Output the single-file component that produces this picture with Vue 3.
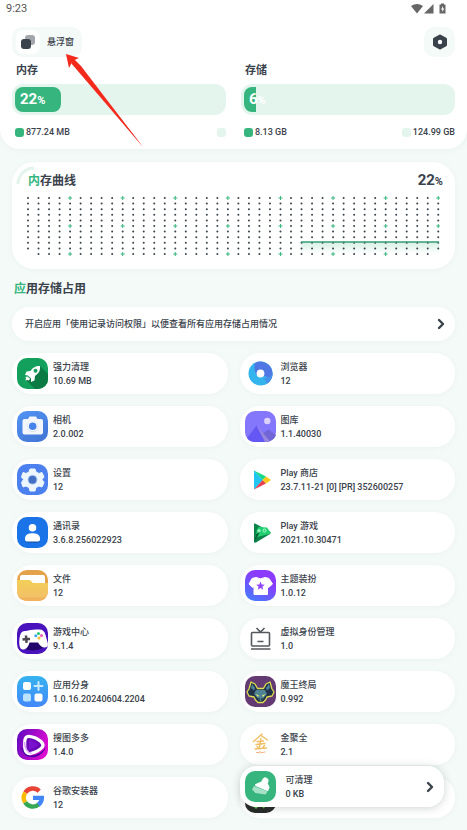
<script setup>
import { computed } from 'vue';

const gauges = [
  { label: '内存', percent: 22, used: '877.24 MB', total: '' },
  { label: '存储', percent: 6, used: '8.13 GB', total: '124.99 GB' },
];

// Icon artwork, drawn on a 31 x 31 grid
const icons = {
  rocket: `<rect width="31" height="31" rx="10" fill="#12a05c"/>
    <path d="M23 8 31 16V21A10 10 0 0 1 21 31H18L9 22Z" fill="#0b7a43"/>
    <path d="M23 8C18 8 15.500 10 13.500 13L9.500 13.500 8 17 11 17.500 14 20.500 14 24 17.500 22.500 18 18C21.500 15.500 23.500 13 23 8Z" fill="#fff"/>
    <circle cx="18.500" cy="12.800" r="2" fill="#12a05c"/>
    <path d="M10.500 18.500 8.500 19 9 20.500 8.500 22.500 10.500 22 12 22.500 13 20.500Z" fill="#fff"/>`,
  camera: `<defs><linearGradient id="cam" x2="0.600" y2="1"><stop stop-color="#5295f5"/><stop offset="1" stop-color="#4478d8"/></linearGradient></defs>
    <rect width="31" height="31" rx="10" fill="url(#cam)"/>
    <path d="M7.500 8H11L12.500 5.500H19L20.500 8H24Q26 8 26 10V21.500Q26 23.500 24 23.500H7.500Q5.500 23.500 5.500 21.500V10Q5.500 8 7.500 8Z" fill="#f3f6fb"/>
    <circle cx="15.700" cy="15.500" r="5.600" fill="#d5dff0"/><circle cx="15.700" cy="15.300" r="5" fill="#fff"/>
    <circle cx="15.700" cy="15.300" r="3.800" fill="#4583ea"/>`,
  gear: `<rect width="31" height="31" rx="10" fill="#4c80ee"/>
    <path d="M13 5H18L19 8 22 9.500 25 8.500 27 13 25 15.500 27 18.500 25 23 22 22 19 23.500 18 27H13L12 23.500 9 22 6 23 4.500 18.500 6.500 15.500 4.500 13 6 8.500 9 9.500 12 8Z" fill="#edf6ff" stroke="#edf6ff" stroke-width="1" stroke-linejoin="round"/>
    <circle cx="15.500" cy="15.700" r="5" fill="#b9d2f6"/><circle cx="15.500" cy="15.700" r="4" fill="#436fc4"/>`,
  contact: `<rect width="31" height="31" rx="10" fill="#1b73e8"/>
    <path d="M8 24H23Q22 26 20 26H11Z" fill="#155bb9"/>
    <circle cx="15.500" cy="10.800" r="3.800" fill="#fff"/>
    <path d="M8 21.500C8 17.500 12 16.300 15.500 16.300S23 17.500 23 21.500V22.500Q23 24.500 21 24.500H10Q8 24.500 8 22.500Z" fill="#fff"/>`,
  folder: `<defs><linearGradient id="fold" x2="0" y2="1"><stop stop-color="#f3cf58"/><stop offset="1" stop-color="#f3bd6a"/></linearGradient></defs>
    <rect width="31" height="31" rx="10" fill="#e4a24b"/>
    <path d="M3 14V7Q3 5 5 5H26Q28 5 28 7V14Z" fill="#fff"/>
    <path d="M0 10H12Q14 10 14.500 11.500Q15 13 17 13H31V21A10 10 0 0 1 21 31H10A10 10 0 0 1 0 21Z" fill="url(#fold)"/>
    <path d="M1 25.500Q1.500 28 4 29.200L10 31H21Q28 30.500 30 25.500L28 27.500H3Z" fill="#f0b25a"/>`,
  gamepad: `<rect width="31" height="31" rx="10" fill="#4a12bd"/>
    <path d="M2 22Q10 29 20 27 27 26 29 20L20 18H12Z" fill="#21056c"/>
    <path d="M9 8Q14 6 22 6.500Q27 6 28.500 12L31 21Q31 24.500 27.500 24.500Q24 24.500 21 19.500H12.500Q11 25.500 7 26.500Q2.500 27 2.300 21Q2 14 4 10Q5.500 7.500 9 8Z" fill="#fff"/>
    <path d="M8 12.500H10.500V15H13V17.500H10.500V20H8V17.500H5.500V15H8Z" transform="rotate(-5 9 16)" fill="#4b4650"/>
    <circle cx="21.500" cy="10.500" r="1.600" fill="#36c77b"/><circle cx="24.500" cy="12.500" r="1.500" fill="#e659b5"/>
    <circle cx="18.800" cy="12.800" r="1.500" fill="#36a8e9"/><circle cx="22" cy="15" r="1.600" fill="#f6be38"/>`,
  clone: `<defs><linearGradient id="cl" x2="0" y2="1"><stop stop-color="#36b3ee"/><stop offset="1" stop-color="#4387fa"/></linearGradient></defs>
    <rect width="31" height="31" rx="10" fill="url(#cl)"/>
    <rect x="6" y="6" width="8" height="8" rx="2" fill="#fff"/><rect x="6" y="17.500" width="8" height="8" rx="2" fill="#b9e3ff"/>
    <rect x="17.500" y="17.500" width="8" height="8" rx="2" fill="#fff"/>
    <path d="M21.500 6V14M17.500 10H25.500" stroke="#c8eaff" stroke-width="2" stroke-linecap="round"/>`,
  video: `<defs><linearGradient id="vid" y2="0.400"><stop stop-color="#5a0bc0"/><stop offset="1" stop-color="#dc0bd0"/></linearGradient></defs>
    <rect width="31" height="31" rx="10" fill="url(#vid)"/>
    <path d="M4 18Q6 29 17 28 27 26 29 17Q25 26 13 27Z" fill="#42049a"/>
    <path d="M12 7.300Q8 7 7.700 13V18Q8 25 13.500 24.500Q21 23 25.500 18Q27 15.500 24 12.500Q19 8 12 7.300Z" fill="#6a08b8" stroke="#fff" stroke-width="3.200"/>
    <path d="M7.500 13Q8 23 14.500 24.500" stroke="#d9a8f5" stroke-width="1.500" fill="none"/>
    <path d="M12 11V21Q17 20 21 16Q17 11.500 12 11Z" fill="#7c10cf"/>`,
  google: `<g fill="none" stroke-width="4.400"><path d="M8.300 10.600A9 9 0 0 1 22.200 9.100" stroke="#e94335"/>
    <path d="M8.200 20.300A9 9 0 0 1 8.300 10.600" stroke="#fbbc05"/><path d="M21.800 22.400A9 9 0 0 1 8.200 20.300" stroke="#34a853"/>
    <path d="M16 15.900H24.800A9 9 0 0 1 21.300 22.800" stroke="#4285f4"/></g>`,
  browser: `<circle cx="15.500" cy="15.500" r="12" fill="#34b4ec"/>
    <path d="M10 5Q8 12 12 17 16 20.500 20 18Q26 20 22 25.600A12 12 0 0 0 20 4.400Q14 2.500 10 5Z" fill="#4f78e4"/>
    <path d="M15.500 19.500Q21 20 21.500 26A12 12 0 0 0 27.500 15Q24 22 15.500 19.500Z" fill="#4692e8"/>
    <circle cx="15.500" cy="15.500" r="3.900" fill="#fff"/>`,
  gallery: `<rect width="31" height="31" rx="10" fill="#8577fb"/>
    <path d="M17 23 23.500 18.500 31 24Q29 30 21 31H15Z" fill="#7165d8"/>
    <path d="M2 27 11.500 14.500 22 31H10Q4.500 31 2 27Z" fill="#6557f3"/>
    <path d="M11.500 14.500 25 30.300 20 31Z" fill="#9787de"/><circle cx="22.300" cy="10" r="3.200" fill="#dcd2fc"/>`,
  play: `<path d="M9 6.500V25.500L18 16Z" fill="#20c5f4"/><path d="M9 6.500 21 12.500 17.700 16Z" fill="#18d987"/>
    <path d="M9 25.500 21 19.500 17.700 16Z" fill="#e74150"/><path d="M21 12.500 26 16 21 19.500 17.500 16Z" fill="#fcc818"/>`,
  playgames: `<path d="M9 6.500Q10 6 12 7.500L25 14.500Q26.500 16 25 17L11 25.500Q9 26 9 24.500Z" fill="#0b8349"/>
    <path d="M12 12.500 13.500 10 22 10.500 25.500 15.500 24.500 17 10 20.500Z" fill="#23d071"/><path d="M9 25.500 15 15 11 17Z" fill="#066137"/>
    <path d="M14 12V15.500M12.300 13.800H15.700" stroke="#c5ffd8" stroke-width="1"/>
    <circle cx="19.500" cy="13.500" r="1.500" fill="none" stroke="#c5ffd8" stroke-width="0.900"/>`,
  theme: `<defs><linearGradient id="th" x1="0.200" y1="1" x2="0.600" y2="0.300"><stop stop-color="#467bff"/><stop offset="1" stop-color="#8b3bfd"/></linearGradient></defs>
    <rect width="31" height="31" rx="10" fill="url(#th)"/>
    <path d="M11 7.500Q15.500 10 20 7.500L24 8.500 27.500 14 23.500 17.500 22.500 16.500V24.500H9V16.500L7.500 17.500 4 14 7 8.500Z" fill="#fff" stroke="#fff" stroke-linejoin="round"/>
    <path d="M15.500 11.500 16.700 14.500 19.800 14.700 17.400 16.700 18.200 19.700 15.500 18 12.800 19.700 13.600 16.700 11.200 14.700 14.300 14.500Z" fill="#9147f5"/>`,
  device: `<g fill="none" stroke="#55585c" stroke-width="1.600"><rect x="6.500" y="9.500" width="18" height="13.500" rx="1"/>
    <path d="M11.500 5 15.500 9 19.500 5M12.500 18.500H18.500M6 26H25.500"/></g>`,
  demon: `<rect width="31" height="31" rx="10" fill="#633a71"/>
    <path d="M6 6 10 8 12.500 12.500H18.500L21 8 25 6 27 13 29 16 27 20 22 21 20.500 24 18 26.500H13L10.500 24 9 21 4 20 2 16 4 13Z" fill="#213249" stroke="#dddf51" stroke-width="1.300" stroke-linejoin="round"/>
    <path d="M7 8 10 12 9 14.500 6 12ZM24 8 21 12 22 14.500 25 12Z" fill="#498299"/>
    <path d="M11 14H20L22 18 18.500 22 17 25H14L12.500 22 9 18Z" fill="#4f8293"/>
    <path d="M10.500 18 14 19.500 13 21ZM20.500 18 17 19.500 18 21Z" fill="#eef56b"/><path d="M14 22V25M17 22V25" stroke="#172334"/>`,
  gold: `<g fill="none" stroke="#f0bd63" stroke-linecap="round"><path d="M17 5 8.500 12.500M16 6.500 22.500 11M12 12.500 18.500 12M16 9.500 14.500 18M11 15.500 20 14.500M12 17.500 14 19M19.500 16.500 18 18.500M10 20 21.500 19" stroke-width="1.400"/>
    <path d="M11.500 23.500H13.500M15 22.500V24M16.500 23.500H18M19 23H20" stroke="#f2b183" stroke-width="1.200"/></g>`,
  dark: `<rect width="31" height="31" rx="10" fill="#292b2a"/><path d="M9 24 11 26 13 24M18 26 20 24" stroke="#5fbf45" stroke-width="1.500" fill="none"/>`,
  broom: `<rect width="31" height="31" rx="10" fill="#36b67e"/>
    <path d="M11 14 17 11.500 18.500 8.500Q21 6 22.500 9Q23 10.500 21.500 12L23.500 16.500 22.500 19Z" fill="#fff" stroke="#fff" stroke-width="2" stroke-linejoin="round"/>
    <path d="M9 15 22.500 20.500 20.500 23.500 10.500 22 7 18.500Z" fill="#a5e2c8"/>`,
};

const apps = [
  { name: '强力清理', detail: '10.69 MB', icon: 'rocket' },
  { name: '浏览器', detail: '12', icon: 'browser' },
  { name: '相机', detail: '2.0.002', icon: 'camera' },
  { name: '图库', detail: '1.1.40030', icon: 'gallery' },
  { name: '设置', detail: '12', icon: 'gear' },
  { name: 'Play 商店', detail: '23.7.11-21 [0] [PR] 352600257', icon: 'play' },
  { name: '通讯录', detail: '3.6.8.256022923', icon: 'contact' },
  { name: 'Play 游戏', detail: '2021.10.30471', icon: 'playgames' },
  { name: '文件', detail: '12', icon: 'folder' },
  { name: '主题装扮', detail: '1.0.12', icon: 'theme' },
  { name: '游戏中心', detail: '9.1.4', icon: 'gamepad' },
  { name: '虚拟身份管理', detail: '1.0', icon: 'device' },
  { name: '应用分身', detail: '1.0.16.20240604.2204', icon: 'clone' },
  { name: '魔王终局', detail: '0.992', icon: 'demon' },
  { name: '搜图多多', detail: '1.4.0', icon: 'video' },
  { name: '金聚全', detail: '2.1', icon: 'gold' },
  { name: '谷歌安装器', detail: '12', icon: 'google' },
  { name: '', detail: '', icon: 'dark' },
];

const COLS = 40;
const ROWS = 11;

// Every fifth column carries a plus at the top, middle and bottom
const grid = computed(() => {
  const dots = [];
  const marks = [];
  for (let c = 0; c < COLS; c++) {
    for (let r = 0; r < ROWS; r++) {
      // both bottom corners stay empty
      if (r === ROWS - 1 && (c === 0 || c === COLS - 1)) continue;
      const point = { x: 2 + c * 10.52, y: 3 + r * 5.6 };
      if (c % 5 === 4 && r % 5 === 0) marks.push(point);
      else dots.push(point);
    }
  }
  return { dots, marks };
});
</script>

<template>
  <div class="page">
    <header class="top">
      <div class="status">
        <span>9:23</span>
        <svg width="36" height="12" viewBox="0 0 36 12" fill="#666">
          <path d="M0 3Q6 -1 12 3L6 10.500Z" />
          <path d="M13 10.500 22.500 1V10.500Z" />
          <path d="M28.500 1.500H30V0.500H33V1.500H34.500V10.500H28.500Z" />
          <path d="M32 3 30 6.500H31.300V9L33.300 5.500H32Z" fill="#fff" />
        </svg>
      </div>

      <div class="toolbar">
        <button class="float-btn">
          <span class="float-icon">
            <svg width="14" height="14" viewBox="0 0 14 14">
              <rect x="4" y="0" width="10" height="10" rx="3" fill="#a3a7ab" />
              <rect x="0" y="4" width="10" height="10" rx="3" fill="#3a424b" />
            </svg>
          </span>
          悬浮窗
        </button>
        <button class="settings-btn" aria-label="设置">
          <svg width="16" height="16" viewBox="0 0 16 16">
            <path d="M8 2 13.500 5V11L8 14 2.500 11V5Z" fill="#3a424b" stroke="#3a424b" stroke-width="3" stroke-linejoin="round" />
            <circle cx="8" cy="8" r="2.200" fill="#fff" />
          </svg>
        </button>
      </div>

      <div class="gauges">
        <section v-for="g in gauges" :key="g.label" class="gauge">
          <h2>{{ g.label }}</h2>
          <div class="bar">
            <div class="fill" :class="{ clipped: g.percent < 10 }" :style="{ width: g.percent + '%' }">
              <span class="percent">{{ g.percent }}<small>%</small></span>
            </div>
          </div>
          <div class="legend">
            <span class="key"><i class="swatch used"></i>{{ g.used }}</span>
            <span class="key"><i class="swatch"></i>{{ g.total }}</span>
          </div>
        </section>
      </div>
    </header>

    <main>
      <section class="chart card">
        <svg class="corner" width="20" height="20" viewBox="0 0 20 20">
          <path d="M2 18A16 16 0 0 1 18 2" fill="none" stroke="#e3f4ec" stroke-width="3" />
        </svg>
        <div class="chart-head">
          <h2><em>内</em>存曲线</h2>
          <span class="percent">22<small>%</small></span>
        </div>
        <svg class="plot" viewBox="0 0 414 62">
          <defs>
            <linearGradient id="area" x2="0" y2="1">
              <stop stop-color="#36b67e" stop-opacity="0.2" />
              <stop offset="1" stop-color="#36b67e" stop-opacity="0" />
            </linearGradient>
          </defs>
          <rect x="275" y="47" width="138" height="12" fill="url(#area)" />
          <circle v-for="(d, i) in grid.dots" :key="i" :cx="d.x" :cy="d.y" r="1" fill="#3a424b" />
          <path
            v-for="(m, i) in grid.marks"
            :key="'m' + i"
            :d="`M${m.x - 2} ${m.y}h4M${m.x} ${m.y - 2}v4`"
            stroke="#36b67e"
          />
          <path d="M275 47H413" stroke="#369c74" stroke-width="1.600" />
        </svg>
      </section>

      <h2 class="section-title"><em>应</em>用存储占用</h2>

      <button class="notice card">
        <span>开启应用「使用记录访问权限」以便查看所有应用存储占用情况</span>
        <svg class="chevron" width="8" height="12" viewBox="0 0 8 12"><path d="M2 2 6 6 2 10" /></svg>
      </button>

      <ul class="apps">
        <li v-for="app in apps" :key="app.icon">
          <button class="app card">
            <svg class="app-icon" viewBox="0 0 31 31" aria-hidden="true" v-html="icons[app.icon]"></svg>
            <span class="app-text">
              <span>{{ app.name }}</span>
              <span>{{ app.detail }}</span>
            </span>
          </button>
        </li>
      </ul>
    </main>

    <button class="cleaner">
      <svg class="app-icon" viewBox="0 0 31 31" aria-hidden="true" v-html="icons.broom"></svg>
      <span class="app-text">
        <span>可清理</span>
        <span>0 KB</span>
      </span>
      <svg class="chevron" width="8" height="12" viewBox="0 0 8 12"><path d="M2 2 6 6 2 10" /></svg>
    </button>

    <svg class="pointer" width="80" height="96" viewBox="0 0 80 96" aria-hidden="true">
      <path d="M1 0 14 4 9.500 6 78 93 7 8 4 14Z" fill="#f3291c" />
      <path d="M9 5 16 12 78 93 6 9Z" fill="#f3291c" />
    </svg>
  </div>
</template>

<style>
body {
  background: #f4faf8;
}
</style>

<style scoped>
.page {
  position: relative;
  height: 100vh;
  overflow: hidden;
  background: #f4faf8;
  color: #3a424b;
  font-family: Roboto, "Noto Sans CJK SC", sans-serif;
  font-size: 9px;
  font-weight: 500;
  line-height: 14px;
}

button {
  border: none;
  padding: 0;
  color: inherit;
  font: inherit;
  text-align: left;
  cursor: pointer;
}

h2 {
  margin: 0;
  font-weight: 700;
}

em {
  color: #36b67e;
  font-style: normal;
}

svg {
  display: block;
  flex-shrink: 0;
}

.top {
  background: #fff;
  border-radius: 0 0 20px 20px;
  padding: 0 12px 10px;
  box-shadow: 0 1px 6px rgba(60, 110, 90, 0.06);
}

.status {
  display: flex;
  justify-content: space-between;
  align-items: center;
  height: 18px;
  margin: 0 8px 9px -6px;
  font-size: 11px;
  font-weight: 400;
  color: #555;
}

.toolbar {
  display: flex;
  justify-content: space-between;
}

.float-btn,
.settings-btn {
  display: flex;
  align-items: center;
  height: 30px;
  border-radius: 10px;
  background: #f4faf8;
}

.float-btn {
  gap: 7px;
  padding: 0 8px 0 4px;
}

.float-icon {
  display: flex;
  align-items: center;
  justify-content: center;
  width: 24px;
  height: 24px;
  border-radius: 8px;
  background: #fff;
}

.settings-btn {
  justify-content: center;
  width: 31px;
}

.gauges {
  display: grid;
  grid-template-columns: 1fr 1fr;
  gap: 15px;
  margin-top: 6px;
}

.gauge h2 {
  padding-left: 4px;
  font-size: 11px;
  line-height: 16px;
}

.bar {
  height: 25px;
  margin-top: 5px;
  padding: 3px;
  border-radius: 11px;
  background: #e4f5ed;
}

.fill {
  display: flex;
  align-items: center;
  height: 100%;
  border-radius: 8px;
  background: #36b67e;
  color: #fff;
}

.fill.clipped {
  border-radius: 8px 0 0 8px;
}

.fill .percent {
  padding-left: 5px;
}

.percent {
  font-size: 15px;
  font-weight: 700;
  white-space: nowrap;
}

.percent small {
  font-size: 11px;
}

.legend {
  display: flex;
  justify-content: space-between;
  margin-top: 10px;
  padding-left: 3px;
}

.key {
  display: flex;
  align-items: center;
  gap: 2px;
}

.swatch {
  width: 9px;
  height: 9px;
  border-radius: 3px;
  background: #e4f5ed;
}

.swatch.used {
  background: #36b67e;
}

main {
  padding: 13px 12px 0;
}

.card {
  background: #fff;
  box-shadow: 0 1px 6px rgba(60, 110, 90, 0.05);
}

.chart {
  position: relative;
  border-radius: 22px;
  padding: 10px 12px 12px 14px;
}

.corner {
  position: absolute;
  left: 4px;
  top: 4px;
}

.chart-head {
  position: relative;
  display: flex;
  justify-content: space-between;
  align-items: center;
  height: 18px;
  padding: 0 0 0 2px;
}

.chart-head h2 {
  font-size: 12px;
}

.plot {
  box-sizing: border-box;
  width: 100%;
  margin-top: 5px;
  padding-right: 3px;
}

.section-title {
  margin: 11px 2px 9px;
  font-size: 12px;
  line-height: 18px;
}

.notice {
  display: flex;
  justify-content: space-between;
  align-items: center;
  width: 100%;
  height: 34px;
  padding: 0 10px 0 13px;
  border-radius: 17px;
}

.chevron {
  fill: none;
  stroke: #3a424b;
  stroke-width: 2.4;
  stroke-linecap: round;
  stroke-linejoin: round;
}

.apps {
  display: grid;
  grid-template-columns: 1fr 1fr;
  gap: 12px;
  margin: 12px 0 0;
  padding: 0;
  list-style: none;
}

.app {
  display: flex;
  align-items: center;
  gap: 5px;
  width: 100%;
  height: 41px;
  padding: 0 5px;
  border-radius: 20px;
}

.app-icon {
  width: 31px;
  height: 31px;
}

.app-text {
  display: flex;
  flex-direction: column;
}

.cleaner {
  position: absolute;
  left: calc(50% + 6px);
  right: 23px;
  bottom: 23px;
  display: flex;
  align-items: center;
  gap: 10px;
  height: 41px;
  padding: 0 10px 0 5px;
  border-radius: 16px;
  background: #fff;
  box-shadow: 0 1px 8px rgba(30, 50, 45, 0.22);
}

.cleaner .chevron {
  margin-left: auto;
}

.pointer {
  position: absolute;
  left: 65px;
  top: 54px;
  pointer-events: none;
}
</style>
